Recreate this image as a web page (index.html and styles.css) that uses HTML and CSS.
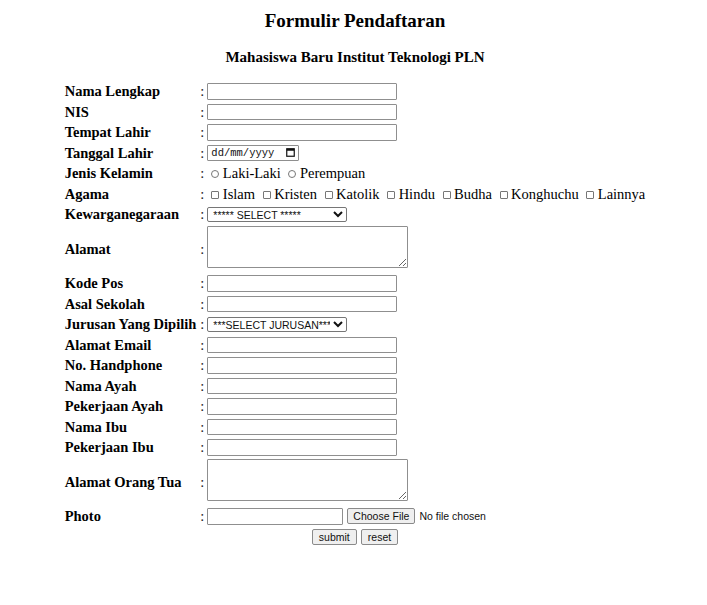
FILE: index.html
```html
<!DOCTYPE html>
<html lang="id">
<head>
    <meta charset="UTF-8">
    <meta name="viewport" content="width=device-width, initial-scale=1.0">
    <title>Formulir Pendaftaran</title>
    <link rel="stylesheet" href="styles.css">
</head>
<body>
    <h1 class="title">Formulir Pendaftaran</h1>
    <h2 class="subtitle">Mahasiswa Baru Institut Teknologi PLN</h2>

    <form class="form">
        <table class="form-table">
            <tr>
                <td class="label">Nama Lengkap</td>
                <td class="colon">:</td>
                <td><input type="text" class="field"></td>
            </tr>
            <tr>
                <td class="label">NIS</td>
                <td class="colon">:</td>
                <td><input type="text" class="field"></td>
            </tr>
            <tr>
                <td class="label">Tempat Lahir</td>
                <td class="colon">:</td>
                <td><input type="text" class="field"></td>
            </tr>
            <tr>
                <td class="label">Tanggal Lahir</td>
                <td class="colon">:</td>
                <td>
                    <span class="date-box">
                        <span class="date-text">dd/mm/yyyy</span>
                        <svg class="date-icon" width="9" height="9" viewBox="0 0 9 9">
                            <rect x="0.75" y="0.75" width="7.5" height="7.5" fill="none" stroke="#111" stroke-width="1.2"/>
                            <rect x="0.75" y="0.75" width="7.5" height="2" fill="#111"/>
                        </svg>
                    </span>
                </td>
            </tr>
            <tr>
                <td class="label">Jenis Kelamin</td>
                <td class="colon">:</td>
                <td class="options">
                    <label><input type="radio" name="jk" class="radio">Laki-Laki</label>
                    <label><input type="radio" name="jk" class="radio">Perempuan</label>
                </td>
            </tr>
            <tr>
                <td class="label">Agama</td>
                <td class="colon">:</td>
                <td class="options">
                    <label><input type="checkbox" class="check">Islam</label>
                    <label><input type="checkbox" class="check">Kristen</label>
                    <label><input type="checkbox" class="check">Katolik</label>
                    <label><input type="checkbox" class="check">Hindu</label>
                    <label><input type="checkbox" class="check">Budha</label>
                    <label><input type="checkbox" class="check">Konghuchu</label>
                    <label><input type="checkbox" class="check">Lainnya</label>
                </td>
            </tr>
            <tr>
                <td class="label">Kewarganegaraan</td>
                <td class="colon">:</td>
                <td>
                    <select class="select">
                        <option>***** SELECT *****</option>
                        <option>WNI</option>
                        <option>WNA</option>
                    </select>
                </td>
            </tr>
            <tr>
                <td class="label">Alamat</td>
                <td class="colon">:</td>
                <td><textarea class="area"></textarea></td>
            </tr>
            <tr>
                <td class="label">Kode Pos</td>
                <td class="colon">:</td>
                <td><input type="text" class="field"></td>
            </tr>
            <tr>
                <td class="label">Asal Sekolah</td>
                <td class="colon">:</td>
                <td><input type="text" class="field"></td>
            </tr>
            <tr>
                <td class="label">Jurusan Yang Dipilih</td>
                <td class="colon">:</td>
                <td>
                    <select class="select">
                        <option>***SELECT JURUSAN***</option>
                        <option>S1 Teknik Elektro</option>
                        <option>S1 Teknik Informatika</option>
                    </select>
                </td>
            </tr>
            <tr>
                <td class="label">Alamat Email</td>
                <td class="colon">:</td>
                <td><input type="text" class="field"></td>
            </tr>
            <tr>
                <td class="label">No. Handphone</td>
                <td class="colon">:</td>
                <td><input type="text" class="field"></td>
            </tr>
            <tr>
                <td class="label">Nama Ayah</td>
                <td class="colon">:</td>
                <td><input type="text" class="field"></td>
            </tr>
            <tr>
                <td class="label">Pekerjaan Ayah</td>
                <td class="colon">:</td>
                <td><input type="text" class="field"></td>
            </tr>
            <tr>
                <td class="label">Nama Ibu</td>
                <td class="colon">:</td>
                <td><input type="text" class="field"></td>
            </tr>
            <tr>
                <td class="label">Pekerjaan Ibu</td>
                <td class="colon">:</td>
                <td><input type="text" class="field"></td>
            </tr>
            <tr>
                <td class="label">Alamat Orang Tua</td>
                <td class="colon">:</td>
                <td><textarea class="area"></textarea></td>
            </tr>
            <tr>
                <td class="label">Photo</td>
                <td class="colon">:</td>
                <td>
                    <div class="file-row">
                        <input type="text" class="field field-short">
                        <button type="button" class="btn">Choose File</button>
                        <span class="file-note">No file chosen</span>
                    </div>
                </td>
            </tr>
            <tr>
                <td colspan="3">
                    <div class="actions">
                        <button type="submit" class="btn btn-action">submit</button>
                        <button type="reset" class="btn btn-action">reset</button>
                    </div>
                </td>
            </tr>
        </table>
    </form>
</body>
</html>
```

FILE: styles.css
```css
body {
    margin: 0;
    padding: 0 8px 0 11px;
    font-family: "Liberation Serif", "Times New Roman", serif;
    color: #000;
    background-color: #fff;
}
.title {
    font-size: 19px;
    line-height: 22px;
    margin: 10px 0 0;
    text-align: center;
}
.subtitle {
    font-size: 15px;
    line-height: 17px;
    margin: 17px 0 0;
    text-align: center;
}
.form {
    margin: 0;
}
.form-table {
    margin: 14px auto 0;
    border-spacing: 2px;
}
.form-table td {
    padding: 1px;
    font-size: 14.5px;
    line-height: 16.5px;
    vertical-align: middle;
}
.form-table .label {
    font-size: 14.5px;
    font-weight: bold;
    white-space: nowrap;
}
.form-table .colon {
    padding-right: 0;
    color: #222;
}
.field {
    display: block;
    width: 190px;
    height: 16.5px;
    box-sizing: border-box;
    margin: 0;
    padding: 0 2px;
    border: 1px solid #8f8f8f;
    border-radius: 1px;
    font-size: 11px;
}
.field-short {
    width: 136px;
}
.date-box {
    display: flex;
    align-items: center;
    justify-content: space-between;
    width: 92px;
    height: 16.5px;
    box-sizing: border-box;
    padding: 0 3px;
    border: 1px solid #8f8f8f;
    border-radius: 1px;
}
.date-text {
    font-family: "Liberation Mono", "Courier New", monospace;
    font-size: 10.5px;
    color: #111;
}
.options {
    white-space: nowrap;
}
.radio, .check {
    appearance: none;
    width: 8px;
    height: 8px;
    box-sizing: border-box;
    margin: 0 3.5px 0 4px;
    border: 1px solid #777;
    vertical-align: 0;
    background-color: #fff;
}
.radio {
    border-radius: 50%;
}
.check {
    border-radius: 1px;
}
.select {
    display: block;
    width: 140px;
    height: 15px;
    margin: 0;
    padding: 0 0 0 1px;
    border: 1px solid #767676;
    border-radius: 2px;
    font-family: "Liberation Sans", Arial, sans-serif;
    font-size: 10.5px;
    background-color: #fff;
    color: #111;
}
.area {
    display: block;
    width: 201px;
    height: 42.5px;
    box-sizing: border-box;
    margin: -1px 0 3px;
    border: 1px solid #8f8f8f;
    border-radius: 1px;
}
.file-row {
    display: flex;
    align-items: center;
    white-space: nowrap;
}
.btn {
    height: 16px;
    margin: 0;
    padding: 0 5px;
    border: 1px solid #8a8a8a;
    border-radius: 2px;
    background-color: #efefef;
    font-family: "Liberation Sans", Arial, sans-serif;
    font-size: 10.5px;
    line-height: 14px;
    color: #111;
}
.file-row .btn {
    margin-left: 4px;
}
.file-note {
    font-family: "Liberation Sans", Arial, sans-serif;
    font-size: 10.5px;
    color: #111;
    margin-left: 4px;
}
.actions {
    display: flex;
    justify-content: center;
    gap: 4px;
}
.btn-action {
    padding: 0 6px;
}
```
